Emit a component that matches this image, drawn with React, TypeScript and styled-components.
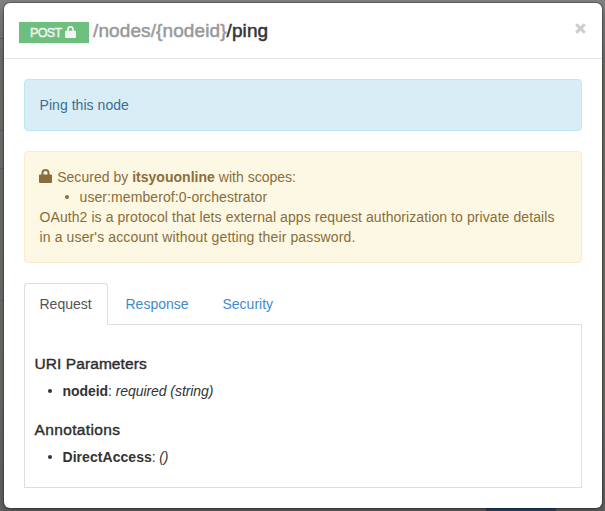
import React from "react";
import styled, { createGlobalStyle, css } from "styled-components";

const GlobalStyle = createGlobalStyle`
  * { box-sizing: border-box; }
  html, body { margin: 0; padding: 0; }
  body {
    font: 14px/20px "Liberation Sans", Arial, sans-serif;
    color: #333;
    overflow: hidden;
  }
`;

const Backdrop = styled.div`
  position: relative;
  width: 605px;
  height: 511px;
  padding: 3px 3px 3px 4px;
  background: linear-gradient(#828281 0, #73716e 60px, #6e6c68 400px, #626262 511px);
`;

const PageRule = styled.i<{ $y: number }>`
  position: absolute;
  left: 0;
  top: ${(p) => p.$y}px;
  width: 4px;
  height: 1px;
  background: #62605e;
`;

const PageButton = styled.i`
  position: absolute;
  left: 486px;
  bottom: 0;
  width: 70px;
  height: 4px;
  background: #2a4764;
`;

const Dialog = styled.section`
  position: relative;
  height: 505px;
  background: #fff;
  border-radius: 6px;
  box-shadow: 0 0 0 1px rgba(0, 0, 0, 0.22), 0 3px 9px rgba(0, 0, 0, 0.35);
`;

const Header = styled.header`
  display: flex;
  align-items: flex-start;
  height: 56px;
  padding: 15px 15px 0;
  border-bottom: 1px solid #e5e5e5;
`;

const Method = styled.span`
  display: flex;
  align-items: center;
  width: 70px;
  height: 21px;
  margin-top: 4px;
  padding-left: 11px;
  background: #6cbf7d;
  color: #f3f3f3;
  font-size: 12.5px;
  letter-spacing: -0.6px;
  -webkit-text-stroke: 0.45px;
`;

const Path = styled.h1`
  margin: 0 0 0 4px;
  font-size: 19px;
  font-weight: 400;
  line-height: 26px;
  letter-spacing: 0.1px;
  white-space: nowrap;
  -webkit-text-stroke: 0.5px;
`;

const Muted = styled.span`
  color: #999;
`;

const Close = styled.button`
  margin: 5px 1px 0 auto;
  padding: 0;
  border: 0;
  background: none;
  line-height: 0;
`;

const Body = styled.div`
  padding: 20px;
`;

const Alert = styled.div<{ $tone: "info" | "warning" }>`
  margin-bottom: 20px;
  padding: 15px 14.5px;
  border: 1px solid;
  border-radius: 4px;
  ${(p) =>
    p.$tone === "info"
      ? css`
          height: 52px;
          color: #3a6f90;
          background: #d9edf7;
          border-color: #bce8f1;
        `
      : css`
          height: 112px;
          color: #8a6d3b;
          background: #fcf8e3;
          border-color: #faebcc;
        `}
`;

const Line = styled.div<{ $spacing?: number }>`
  display: flex;
  white-space: pre;
  letter-spacing: ${(p) => p.$spacing ?? 0}px;
`;

const SecuredText = styled.span`
  margin-left: 1.3px;
`;

const List = styled.ul<{ $indent: number }>`
  margin: 0;
  padding-left: ${(p) => p.$indent}px;
  list-style: none;
`;

const Item = styled.li<{ $spacing?: number }>`
  display: flex;
  align-items: center;
  white-space: pre;
  letter-spacing: ${(p) => p.$spacing ?? 0}px;
  &::before {
    content: "";
    width: 4px;
    height: 4px;
    margin-right: 10.5px;
    border-radius: 50%;
    background: currentColor;
  }
`;

const Name = styled.b<{ $spacing?: number }>`
  letter-spacing: ${(p) => p.$spacing ?? 0}px;
`;

const Tabs = styled.nav`
  display: flex;
  height: 42px;
  margin-bottom: -1px;
`;

const Tab = styled.a<{ $active?: boolean; $width: number }>`
  width: ${(p) => p.$width}px;
  margin-right: 2px;
  padding: 10px 14.5px;
  border: 1px solid transparent;
  border-radius: 4px 4px 0 0;
  color: #428bca;
  ${(p) =>
    p.$active &&
    css`
      position: relative;
      z-index: 1;
      color: #555;
      background: #fff;
      border-color: #ddd #ddd #fff;
    `}
`;

const Panel = styled.div`
  height: 164px;
  padding: 30px 9.5px 0;
  border: 1px solid #ddd;
`;

const Heading = styled.h2<{ $spacing?: number }>`
  margin: 0 0 8px;
  color: #2d2d2d;
  font-size: 15.5px;
  font-weight: 400;
  line-height: 18px;
  letter-spacing: ${(p) => p.$spacing ?? 0}px;
  -webkit-text-stroke: 0.4px;
`;

const Group = styled.div`
  height: 66px;
`;

const LockSvg = styled.svg<{ $left: number; $drop: number }>`
  flex: none;
  margin-left: ${(p) => p.$left}px;
  margin-top: ${(p) => p.$drop}px;
`;

type LockProps = { size: number; left?: number; drop?: number };

const Lock = ({ size, left = 0, drop = 0 }: LockProps) => (
  <LockSvg $left={left} $drop={drop} width={size} height={size + 1} viewBox="0 0 13 14" fill="currentColor">
    <path
      fillRule="evenodd"
      d="M2.500 5.500V3.800C2.500 1.400 4 0 6.500 0S10.500 1.400 10.500 3.800V5.500H12Q13 5.500 13 6.500V13Q13 14 12 14H1Q0 14 0 13V6.500Q0 5.500 1 5.500ZM4.500 5.500H8.500V3.900C8.500 2.600 7.800 1.900 6.500 1.900S4.500 2.600 4.500 3.900Z"
    />
  </LockSvg>
);

export default function App() {
  return (
    <Backdrop>
      <GlobalStyle />
      {[38, 130, 168, 300, 495].map((y) => (
        <PageRule key={y} $y={y} />
      ))}
      <PageButton />
      <Dialog>
        <Header>
          <Method>
            POST
            <Lock size={11} left={3.5} drop={-1} />
          </Method>
          <Path>
            <Muted>/nodes/&#123;nodeid&#125;</Muted>/ping
          </Path>
          <Close aria-label="Close">
            <svg width="11" height="11" viewBox="0 0 11 11" stroke="#ccc" strokeWidth="3">
              <path d="M1.200 1.200L9.800 9.800M9.800 1.200L1.200 9.800" />
            </svg>
          </Close>
        </Header>
        <Body>
          <Alert $tone="info">
            <Line $spacing={0.05}>Ping this node</Line>
          </Alert>
          <Alert $tone="warning">
            <Line $spacing={0.02}>
              <Lock size={13} left={-0.5} drop={2} />
              <SecuredText> Secured by <b>itsyouonline</b> with scopes:</SecuredText>
            </Line>
            <List $indent={25.5}>
              <Item $spacing={0.09}>user:memberof:0-orchestrator</Item>
            </List>
            <Line $spacing={0.08}>
              OAuth2 is a protocol that lets external apps request authorization to private details
            </Line>
            <Line $spacing={0.13}>in a user's account without getting their password.</Line>
          </Alert>
          <Tabs>
            <Tab $active $width={84}>Request</Tab>
            <Tab $width={95}>Response</Tab>
            <Tab $width={83}>Security</Tab>
          </Tabs>
          <Panel>
            <Group>
              <Heading $spacing={0.08}>URI Parameters</Heading>
              <List $indent={13.5}>
                <Item $spacing={-0.07}>
                  <Name $spacing={-0.05}>nodeid</Name>: <i>required (string)</i>
                </Item>
              </List>
            </Group>
            <Group>
              <Heading $spacing={0.36}>Annotations</Heading>
              <List $indent={13.5}>
                <Item $spacing={-0.2}>
                  <Name $spacing={0.05}>DirectAccess</Name>: <i>()</i>
                </Item>
              </List>
            </Group>
          </Panel>
        </Body>
      </Dialog>
    </Backdrop>
  );
}
